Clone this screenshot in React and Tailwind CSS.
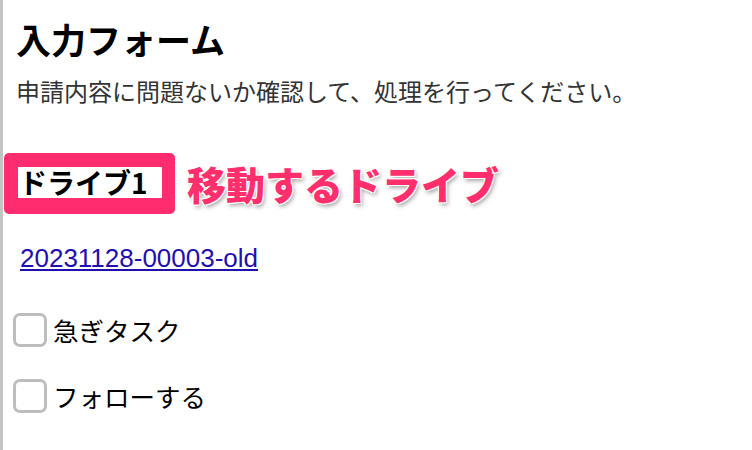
const jp = { fontFamily: '"Noto Sans CJK JP", "Noto Sans", sans-serif' };

function Check({ label }) {
  return (
    <label className="flex items-center -ml-[3px] cursor-pointer">
      <span className="w-[34px] h-[34px] rounded-[7px] border-[3px] border-[#bdbdbd] bg-white shrink-0" />
      <span className="ml-[6px] text-[25.5px] leading-[26px] text-black">{label}</span>
    </label>
  );
}

export default function App() {
  return (
    <div
      className="h-[450px] border-l-[3px] border-[#c4c4c4] bg-white pl-[13px] pt-[21px] text-black"
      style={jp}
    >
      {/* Header */}
      <h1 className="text-[35px] leading-[35px] font-bold">入力フォーム</h1>
      <p className="mt-[23px] text-[24px] leading-[24px] text-[#333]">
        申請内容に問題ないか確認して、処理を行ってください。
      </p>

      {/* Drive label, highlighted */}
      <div className="mt-[50px] flex items-center">
        <div className="-ml-[12px] bg-[#ff2d6f] rounded-[5px] pt-[14px] pb-[16px] pl-[14px] pr-[13px]">
          <div className="w-[144px] bg-white pl-[1px] text-[28px] leading-[31px] font-bold whitespace-nowrap">
            ドライブ1
          </div>
        </div>
        <span className="ml-[12px] text-[39px] leading-[39px] font-black text-[#ff2f6e] [text-shadow:-1px_-1px_0_#fff,1px_-1px_0_#fff,-1px_1px_0_#fff,1px_1px_0_#fff,2px_3px_4px_rgba(0,0,0,0.35)]">
          移動するドライブ
        </span>
      </div>

      {/* Link */}
      <a
        href="#"
        className="block w-fit mt-[31px] ml-[4px] text-[26px] leading-[26px] text-[#1f0fb0] underline underline-offset-2"
        style={{ fontFamily: '"Liberation Sans", Arial, sans-serif' }}
      >
        20231128-00003-old
      </a>

      {/* Options */}
      <div className="mt-[42px] flex flex-col gap-[32px]">
        <Check label="急ぎタスク" />
        <Check label="フォローする" />
      </div>
    </div>
  );
}
